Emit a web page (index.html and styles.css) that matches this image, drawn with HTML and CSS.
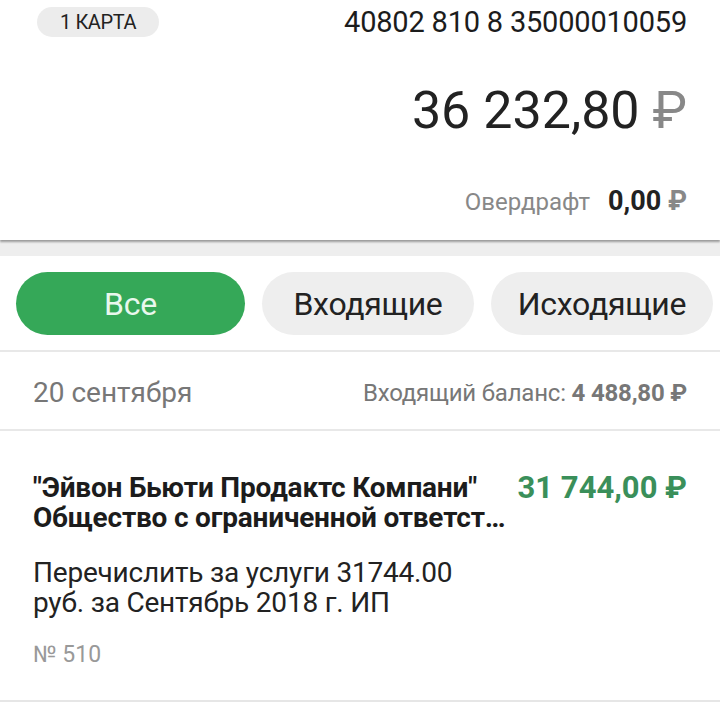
FILE: index.html
```html
<!DOCTYPE html>
<html lang="ru">
<head>
  <meta charset="UTF-8" />
  <meta name="viewport" content="width=device-width, initial-scale=1.0" />
  <title>Счёт</title>
  <link rel="stylesheet" href="styles.css">
</head>
<body>

  <div class="account-card">
    <div class="account-top">
      <span class="card-badge">1 карта</span>
      <span class="account-number">40802 810 8 35000010059</span>
    </div>
    <div class="balance">36 232,80 <span class="rub">₽</span></div>
    <div class="overdraft">
      <span class="overdraft-label">Овердрафт</span>
      <span class="overdraft-value">0,00 <span class="rub">₽</span></span>
    </div>
  </div>

  <div class="filters">
    <button class="filter active">Все</button>
    <button class="filter">Входящие</button>
    <button class="filter">Исходящие</button>
  </div>

  <div class="day-row">
    <span class="day-date">20 сентября</span>
    <span class="day-balance">Входящий баланс: <b>4 488,80 ₽</b></span>
  </div>

  <div class="operation">
    <div class="operation-head">
      <div class="operation-name">"Эйвон Бьюти Продактс Компани"<br>Общество с ограниченной ответст…</div>
      <div class="operation-sum">31 744,00 ₽</div>
    </div>
    <div class="operation-desc">Перечислить за услуги 31744.00<br>руб. за Сентябрь 2018 г. ИП</div>
    <div class="operation-num">№ 510</div>
  </div>

</body>
</html>
```

FILE: styles.css
```css
*, *::before, *::after { box-sizing: border-box; }

body {
  margin: 0;
  font-family: Roboto, "Liberation Sans", sans-serif;
  background-color: white;
  color: #222;
  overflow: hidden;
}

.account-card {
  position: relative;
  z-index: 1;
  background-color: white;
  height: 240px;
  padding: 6px 33px 0 37px;
  box-shadow: 0 2px 2px rgba(0,0,0,0.35);
  display: flex;
  flex-direction: column;
  align-items: flex-end;
}

.account-top {
  width: 100%;
  height: 32px;
  display: flex;
  justify-content: space-between;
  align-items: center;
}

.card-badge {
  background-color: #ececec;
  border-radius: 16px;
  padding: 4px 23px;
  font-size: 20px;
  line-height: 22px;
  letter-spacing: -0.4px;
  text-transform: uppercase;
  color: #222;
}

.account-number {
  font-size: 29px;
  line-height: 32px;
  letter-spacing: -0.2px;
  color: #1c1c1c;
}

.balance {
  margin-top: 43px;
  font-size: 52px;
  line-height: 60px;
  color: #222;
}

.rub { color: #888; }

.overdraft {
  margin-top: 45px;
  height: 30px;
  display: flex;
  align-items: baseline;
  gap: 18px;
}

.overdraft-label {
  font-size: 24px;
  line-height: 30px;
  color: #888;
}

.overdraft-value {
  font-size: 27px;
  line-height: 30px;
  font-weight: bold;
  color: #222;
}

.filters {
  background-color: white;
  border-top: 16px solid #eeeeee;
  height: 112px;
  padding: 16px 0 0 16px;
  display: flex;
  gap: 17px;
  border-bottom: 2px solid #e8e8e8;
}

.filter {
  flex: 0 0 auto;
  height: 63px;
  border: none;
  border-radius: 32px;
  background-color: #eeeeee;
  font-family: inherit;
  font-size: 32px;
  letter-spacing: -0.3px;
  color: #222;
  cursor: pointer;
  width: 212px;
  padding: 0;
}

.filter.active {
  width: 229px;
  background-color: #35a858;
  color: #e9f7ed;
}

.filter:last-child { width: 222px; }

.day-row {
  background-color: white;
  height: 79px;
  padding: 4px 33px 0 33px;
  display: flex;
  justify-content: space-between;
  align-items: center;
  border-bottom: 2px solid #e8e8e8;
}

.day-date {
  font-size: 28px;
  color: #777;
}

.day-balance {
  font-size: 24px;
  color: #777;
  letter-spacing: -0.2px;
}

.day-balance b { color: #777; }

.operation {
  background-color: white;
  height: 271px;
  padding: 42px 33px 0 33px;
  border-bottom: 2px solid #e6e6e6;
}

.operation-head {
  display: flex;
  justify-content: space-between;
  align-items: flex-start;
}

.operation-name {
  font-size: 28px;
  font-weight: bold;
  line-height: 30px;
  letter-spacing: -0.2px;
  color: #1c1c1c;
}

.operation-sum {
  font-size: 31px;
  font-weight: bold;
  color: #3a8f5a;
  line-height: 30px;
  white-space: nowrap;
}

.operation-desc {
  margin-top: 25px;
  font-size: 28px;
  line-height: 30px;
  letter-spacing: -0.2px;
  color: #222;
}

.operation-num {
  margin-top: 24px;
  font-size: 23px;
  line-height: 26px;
  color: #999;
}
```
